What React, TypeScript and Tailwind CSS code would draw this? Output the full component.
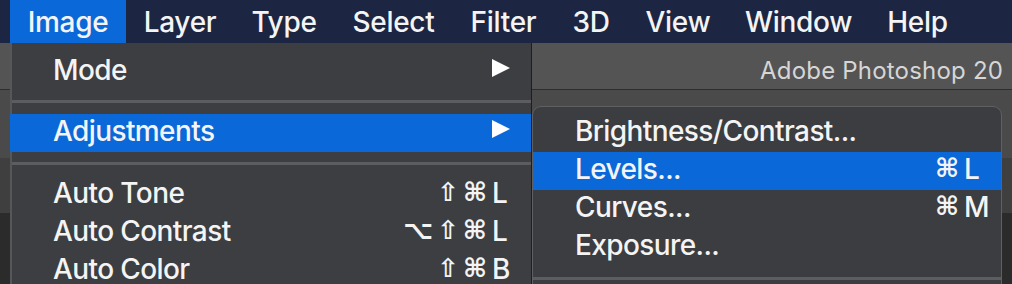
import React from 'react';

const font = "font-['Inter','Liberation_Sans',sans-serif]";
const symFont = "font-['DejaVu_Sans','Inter',sans-serif]";

const menus = [
  { label: 'Image', w: 'w-[116px]', active: true },
  { label: 'Layer', w: 'w-[108px]' },
  { label: 'Type', w: 'w-[100px]' },
  { label: 'Select', w: 'w-[119px]' },
  { label: 'Filter', w: 'w-[101px]' },
  { label: '3D', w: 'w-[74px]' },
  { label: 'View', w: 'w-[100px]' },
  { label: 'Window', w: 'w-[141px]' },
  { label: 'Help', w: 'w-[97px]' },
];

const Arrow = () => (
  <svg width="18" height="18" viewBox="0 0 18 18" className="mt-[-3px]">
    <polygon points="0,0 18,9 0,18" fill="#ffffff" />
  </svg>
);

const Mods: React.FC<{ keys: string }> = ({ keys }) => (
  <span className={`${symFont} text-[26px] font-bold tracking-[4px] mr-[-1px] pb-[5px]`}>{keys}</span>
);

interface RowProps {
  label: string;
  mods?: string;
  keyChar?: string;
  arrow?: boolean;
  active?: boolean;
  sub?: boolean;
}

const Row: React.FC<RowProps> = ({ label, mods, keyChar, arrow, active, sub }) => (
  <div
    className={`flex items-center h-[38px] ${sub ? 'pl-[42px] pr-[11px]' : 'pl-[41px] pr-[19px]'} ${
      active ? (sub ? 'bg-[#0b68d8]' : 'bg-[#0b68d8] -ml-[2px] pl-[43px]') : ''
    }`}
  >
    <span className="flex-1 pb-[5px] whitespace-nowrap tracking-[-0.6px]">{label}</span>
    {mods && <Mods keys={mods} />}
    <span className={`flex items-center ${sub ? 'w-[28px]' : 'w-[22px]'} pl-[2px] pb-[5px]`}>
      {arrow ? <Arrow /> : keyChar}
    </span>
  </div>
);

const Separator: React.FC<{ className?: string }> = ({ className }) => (
  <div className={`h-[3px] bg-[#5b5d60] ${className ?? ''}`} />
);

export default function App() {
  return (
    <div className={`relative w-[1012px] h-[284px] overflow-hidden bg-[#2b2b2b] text-[28px] font-medium text-[#f4f4f5] ${font}`}>
      {/* menu bar */}
      <div className="flex h-[43px] bg-[#1c2541] pl-[10px] tracking-[-0.3px]">
        {menus.map((m) => (
          <div
            key={m.label}
            className={`flex items-center justify-center ${m.w} ${m.active ? 'bg-[#0b68d8]' : ''}`}
          >
            {m.label}
          </div>
        ))}
      </div>

      {/* photoshop window behind */}
      <div className="flex flex-col">
        <div className="h-[47px] bg-[#545454] border-b border-[#2e2e2e] flex items-center pt-[9px] pl-[760px] whitespace-nowrap text-[24px] font-normal tracking-[0.2px] text-[#d6d6d6]">
          Adobe Photoshop 20
        </div>
        <div className="h-[68px] bg-[#4a4a4a]" />
        <div className="h-[55px] bg-[#3f3f3f]" />
      </div>

      {/* Image menu */}
      <div className="absolute left-[10px] top-[43px] w-[522px] h-[260px] bg-[#3c3e41] border-l-2 border-r border-l-[#55575a] border-r-[#1e1e1e] pt-[10px]">
        <Row label="Mode" arrow />
        <Separator className="mt-[9px] mb-[11px]" />
        <Row label="Adjustments" arrow active />
        <Separator className="mt-[10px] mb-[11px]" />
        <Row label="Auto Tone" mods="⇧⌘" keyChar="L" />
        <Row label="Auto Contrast" mods="⌥⇧⌘" keyChar="L" />
        <Row label="Auto Color" mods="⇧⌘" keyChar="B" />
      </div>

      {/* Adjustments submenu */}
      <div className="absolute left-[532px] top-[106px] w-[470px] h-[200px] bg-[#3b3d40] border border-[#5e6063] rounded-t-[9px] pt-[7px] overflow-hidden">
        <Row label="Brightness/Contrast..." sub />
        <Row label="Levels..." mods="⌘" keyChar="L" sub active />
        <Row label="Curves..." mods="⌘" keyChar="M" sub />
        <Row label="Exposure..." sub />
        <Separator className="mt-[11px]" />
      </div>
    </div>
  );
}
